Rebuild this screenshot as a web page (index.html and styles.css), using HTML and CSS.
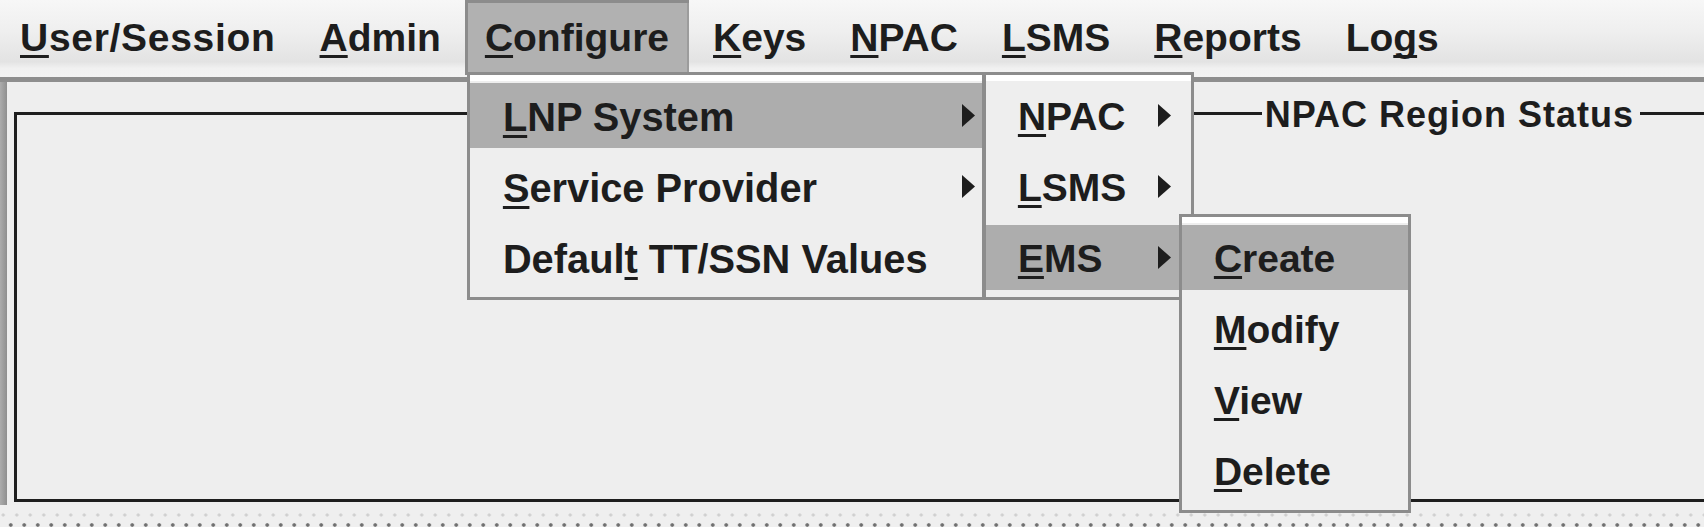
FILE: index.html
```html
<!DOCTYPE html>
<html>
<head>
<meta charset="utf-8">
<link rel="stylesheet" href="styles.css">
</head>
<body>
<nav class="menubar">
  <div class="mb-item wide"><u>U</u>ser/Session</div>
  <div class="mb-item"><u>A</u>dmin</div>
  <div class="mb-item open"><u>C</u>onfigure
    <div class="popup popup-config">
      <div class="mi sel sub"><span><u>L</u>NP System</span><svg class="arrow" width="13" height="23" viewBox="0 0 13 23"><polygon points="0,0 13,11.5 0,23"/></svg>
        <div class="popup popup-system">
          <div class="mi sub"><span><u>N</u>PAC</span><svg class="arrow" width="13" height="23" viewBox="0 0 13 23"><polygon points="0,0 13,11.5 0,23"/></svg></div>
          <div class="mi sub"><span><u>L</u>SMS</span><svg class="arrow" width="13" height="23" viewBox="0 0 13 23"><polygon points="0,0 13,11.5 0,23"/></svg></div>
          <div class="mi sel sub"><span><u>E</u>MS</span><svg class="arrow" width="13" height="23" viewBox="0 0 13 23"><polygon points="0,0 13,11.5 0,23"/></svg>
            <div class="popup popup-ems">
              <div class="mi sel"><span><u>C</u>reate</span></div>
              <div class="mi"><span><u>M</u>odify</span></div>
              <div class="mi"><span><u>V</u>iew</span></div>
              <div class="mi"><span><u>D</u>elete</span></div>
            </div>
          </div>
        </div>
      </div>
      <div class="mi sub"><span><u>S</u>ervice Provider</span><svg class="arrow" width="13" height="23" viewBox="0 0 13 23"><polygon points="0,0 13,11.5 0,23"/></svg></div>
      <div class="mi"><span>Defaul<u>t</u> TT/SSN Values</span></div>
    </div>
  </div>
  <div class="mb-item"><u>K</u>eys</div>
  <div class="mb-item"><u>N</u>PAC</div>
  <div class="mb-item"><u>L</u>SMS</div>
  <div class="mb-item"><u>R</u>eports</div>
  <div class="mb-item">Lo<u>g</u>s</div>
</nav>
<div class="workspace">
  <div class="edge"></div>
  <div class="content">
    <div class="panel">
      <div class="title">NPAC Region Status</div>
    </div>
  </div>
</div>
<div class="status"></div>
</body>
</html>
```
FILE: styles.css
```css
html, body {
  margin: 0;
  padding: 0;
  width: 1704px;
  height: 527px;
  overflow: hidden;
  background: #eeeeee;
  font-family: "Liberation Sans", Arial, sans-serif;
  font-weight: bold;
  color: #1d1d1d;
}

u {
  text-decoration: underline;
  text-decoration-thickness: 3px;
  text-underline-offset: 4px;
  text-decoration-skip-ink: none;
}

.menubar {
  position: relative;
  z-index: 10;
  display: flex;
  gap: 4px;
  height: 77px;
  border-bottom: 5px solid #8e8e8e;
  background: linear-gradient(to bottom, #f7f7f7 0%, #efefef 40%, #e3e3e3 80%, #f1f1f1 89%, #f3f3f3 100%);
  font-size: 39px;
}

.mb-item {
  position: relative;
  padding: 0 20px;
  height: 75px;
  line-height: 75px;
  white-space: nowrap;
}

.mb-item.wide {
  letter-spacing: 0.7px;
}

.mb-item.open {
  background: #b1b1b1;
  box-shadow: inset 3px 3px 0 #8c8c8c, inset -2px 0 0 #9c9c9c;
}

.popup {
  position: absolute;
  box-sizing: border-box;
  border: 3px solid #8c8c8c;
  padding: 7px 0 2px 0;
  background: #eeeeee;
  box-shadow: inset 0 6px 0 #ffffff;
  line-height: normal;
  font-size: 39px;
}

.popup-config {
  left: 2px;
  top: 72px;
  width: 518px;
  font-size: 39.8px;
}

.popup-config > .mi {
  padding-left: 33px;
}

.popup-system {
  left: calc(100% + 1px);
  top: -11px;
  width: 211px;
}

.popup-ems {
  left: calc(100% - 12px);
  top: -11px;
  width: 232px;
}

.mi {
  position: relative;
  display: flex;
  align-items: center;
  box-sizing: border-box;
  height: 71px;
  border-top: 1px solid transparent;
  border-bottom: 5px solid transparent;
  padding: 3px 7px 0 32px;
  line-height: 62px;
  white-space: nowrap;
  background-clip: padding-box;
}

.popup-system > .mi {
  padding-right: 20px;
}

.mi.sel {
  background-color: #adadad;
}

.mi > span {
  flex: 1;
}

.arrow {
  flex: none;
  fill: #1d1d1d;
  margin-top: -3px;
}

.workspace {
  display: flex;
  height: 423px;
}

.edge {
  width: 7px;
  flex: none;
  background: linear-gradient(to right, #acacac, #8f8f8f);
}

.content {
  flex: 1;
  min-width: 0;
  padding: 30px 0 0 7px;
}

.panel {
  position: relative;
  box-sizing: border-box;
  height: 390px;
  border: 3px solid #1e1e1e;
  margin-right: -40px;
}

.title {
  position: absolute;
  top: -20px;
  right: 101px;
  padding: 0 6px 0 3px;
  background: #eeeeee;
  font-size: 36px;
  letter-spacing: 1px;
  line-height: 40px;
  white-space: nowrap;
}

.status {
  height: 22px;
  background-color: #efefef;
  background-image:
    radial-gradient(circle, #6e6e6e 1.4px, transparent 2.2px),
    radial-gradient(circle, #cfcfcf 1.2px, transparent 2px);
  background-size: 13.5px 8px, 13.5px 8px;
  background-position: 4px 16px, 10px 6px;
  background-repeat: repeat-x;
}
```
